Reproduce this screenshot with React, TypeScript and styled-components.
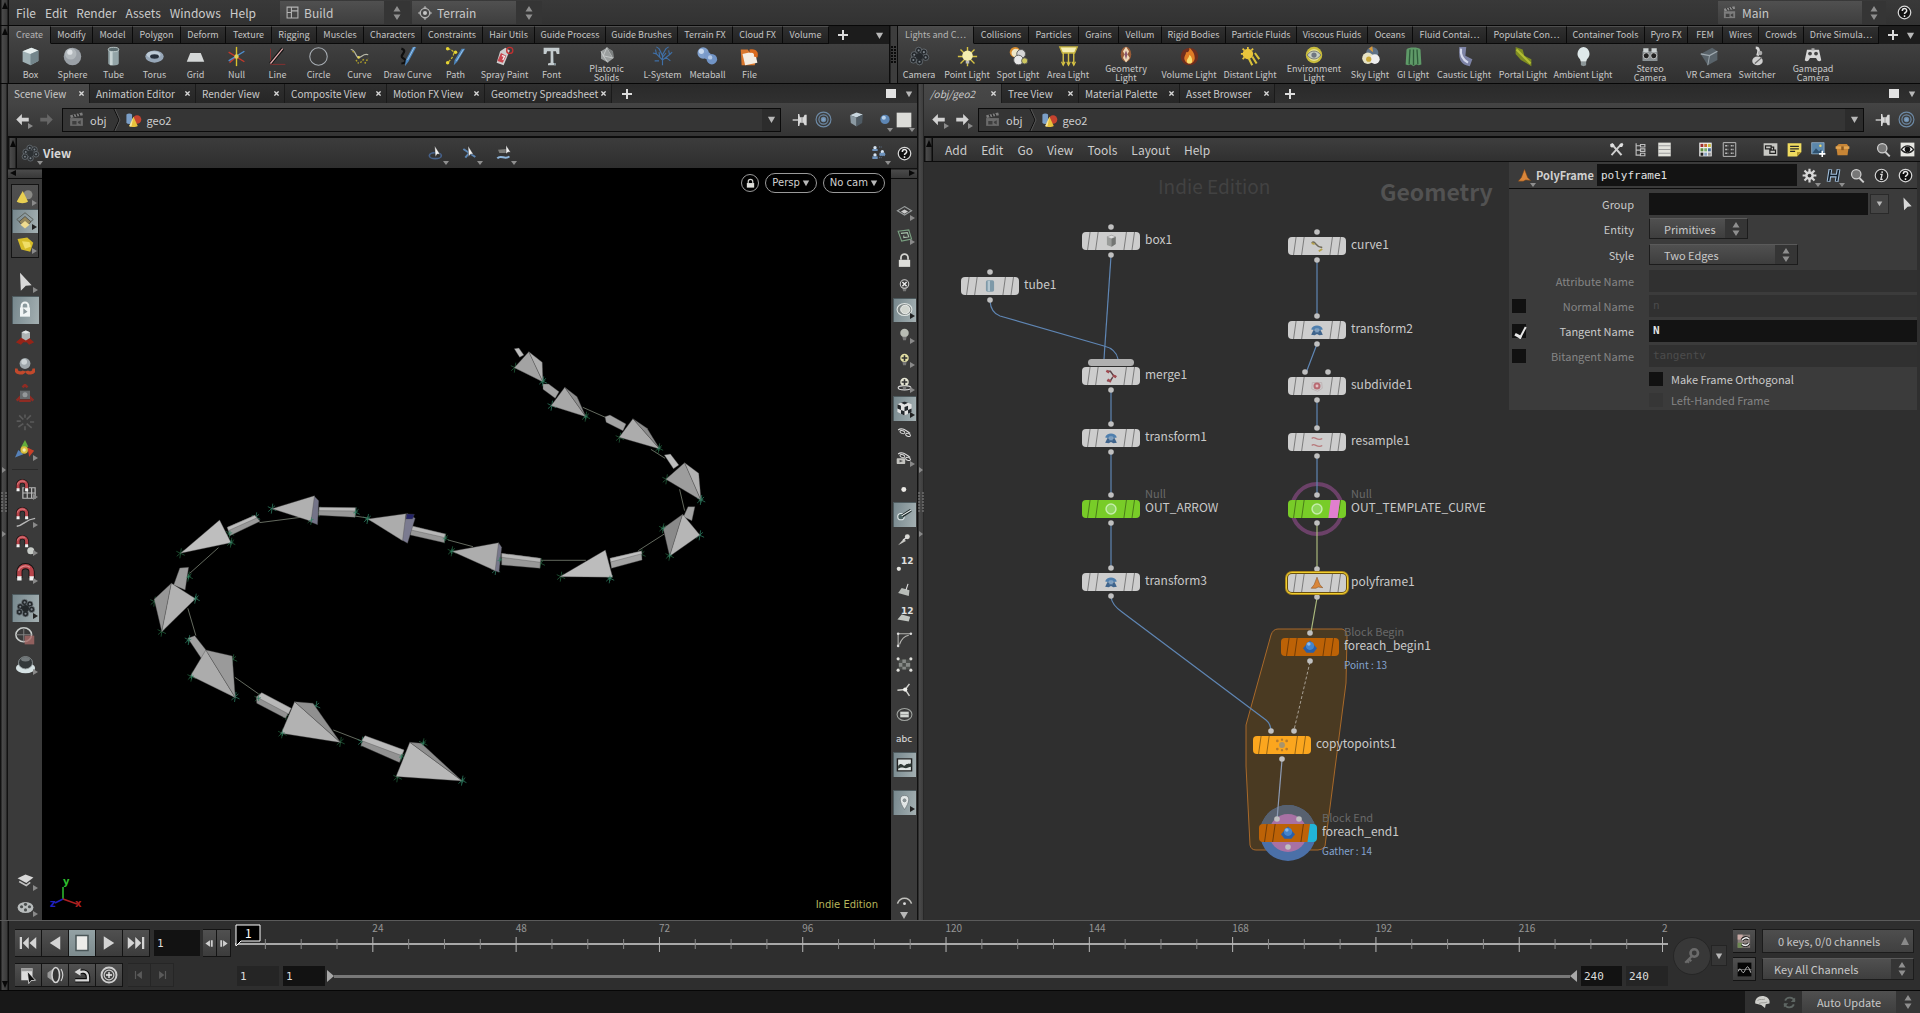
import React from 'react';
import styled, { createGlobalStyle, css } from 'styled-components';

const UI = `'Noto Sans CJK SC', 'Open Sans', sans-serif`;
const MONO = `'DejaVu Sans Mono', 'Liberation Mono', monospace`;

const Global = createGlobalStyle`
  * { box-sizing: border-box; }
  html, body { margin: 0; background: #2b2b2b; }
  body { font-family: ${UI}; font-size: 12px; line-height: 16px; color: #c6c6c6; overflow: hidden; }
  button, input, select { font: inherit; color: inherit; margin: 0; padding: 0; border: 0; background: none; border-radius: 0; outline: 0; }
  button { cursor: default; }
  svg { display: block; flex: none; }
`;

/* ---------- icons ---------- */

const magnet = (
  <>
    <path d="M5 17V10a7 6.500 0 0 1 14 0v7" fill="none" stroke="#111" strokeWidth="7" />
    <path d="M5 16V10a7 6.500 0 0 1 14 0v6" fill="none" stroke="#b8454b" strokeWidth="5" />
    <path d="M4 9a8 7 0 0 1 13-4" fill="none" stroke="#e0868a" strokeWidth="1.500" />
    <path d="M2.500 15h5v5h-5zM16.500 15h5v5h-5z" fill="#f2f2f2" />
  </>
);
const bulb = (c: string) => (
  <>
    <circle cx="12" cy="10" r="6" fill={c} />
    <path d="M9 15h6l-1 5h-4z" fill="#777" />
  </>
);
const clapper = (c: string) => (
  <>
    <path d="M3 6l17-4 1 4-17 4z" fill={c} />
    <path d="M7 5l2 4M11 4l2 4M15 3l2 4" stroke="#222" strokeWidth="1.500" />
    <path d="M3 10h18v11H3z" fill={c} opacity=".75" />
    <path d="M6 14h6v5H6zM14 15l4-2v6l-4-2z" fill="#333" opacity=".8" />
  </>
);
const glasses = (
  <>
    <path d="M3 7c4-3 8-2 17 5" fill="none" stroke="#ddd" strokeWidth="1.500" />
    <ellipse cx="9" cy="10" rx="3.500" ry="2" fill="#333" stroke="#ddd" strokeWidth="1.300" transform="rotate(20 9 10)" />
    <ellipse cx="17" cy="14" rx="3.500" ry="2" fill="#333" stroke="#ddd" strokeWidth="1.300" transform="rotate(20 17 14)" />
  </>
);
const reel = (c: string) => (
  <>
    {[[6, 10], [11, 5], [17, 7], [19, 13], [12, 18], [5, 16]].map(([x, y]) => (
      <g key={x + '-' + y}>
        <circle cx={x} cy={y} r="3.600" fill={c} stroke="#7d858c" strokeWidth=".7" />
        <circle cx={x} cy={y} r="1.200" fill="#7d858c" />
      </g>
    ))}
    <circle cx="12" cy="12" r="4" fill={c} />
  </>
);

const ICONS: Record<string, React.ReactNode> = {
  box: (<><path d="M3 6l10-4 8 3v12l-9 5-9-4z" fill="#9fb0b4" /><path d="M3 6l10-4 8 3-9 4z" fill="#e6eeee" /><path d="M12 9l9-4v12l-9 5z" fill="#73858b" /></>),
  sphere: (<><circle cx="12" cy="12" r="10" fill="#9aa0a6" /><circle cx="10" cy="9" r="6.500" fill="#b2b8bc" /><circle cx="9" cy="7" r="3" fill="#dde1e4" /></>),
  tube: (<><path d="M6 4v16c0 3 12 3 12 0V4z" fill="#93a4a7" /><path d="M8 5v17h3V5z" fill="#c6d2d2" /><ellipse cx="12" cy="4" rx="6" ry="2.500" fill="#5d6d70" stroke="#c6d2d2" /></>),
  torus: (<><ellipse cx="12" cy="12" rx="10.500" ry="7" fill="#97a7b8" /><ellipse cx="11" cy="10" rx="8" ry="4" fill="#bccad6" /><ellipse cx="12" cy="12" rx="5" ry="2.500" fill="#26303c" /></>),
  grid: <path d="M6 8h12l4 10H2z" fill="#d5d8d8" />,
  null: (<><path d="M12 1v22" stroke="#d9c32c" strokeWidth="1.600" /><path d="M3 7l18 11M4 19l8-7" stroke="#c43a2a" strokeWidth="1.600" /><path d="M3 17l18-11" stroke="#4f8fd0" strokeWidth="1.600" /><circle cx="12" cy="12" r="2.500" fill="#e0cf56" /></>),
  line: (<><path d="M4 3v18h17" fill="none" stroke="#8b2f2f" strokeWidth="1" /><path d="M4 20L18 3" stroke="#111" strokeWidth="4" /><path d="M4 20L18 3" stroke="#e6aeb0" strokeWidth="1.400" /></>),
  circle: <circle cx="12" cy="12" r="10" fill="none" stroke="#a8aeb4" strokeWidth="1.200" />,
  curve: (<><path d="M2 4c6 0 5 9 9 9s5-5 11-3" fill="none" stroke="#b8b8a8" strokeWidth="1.400" /><path d="M4 6l3 2M8 16l3 4M13 19l5-5M18 20l4-6" stroke="#b3a32a" strokeWidth="1.600" strokeDasharray="2 1.500" /><circle cx="11" cy="13" r="1.500" fill="#e6d55a" /></>),
  draw: (<><path d="M5 3c9 3-4 8 2 11s1 6-2 6" fill="none" stroke="#0e0e0e" strokeWidth="2.500" /><path d="M22 1l-9 17-4 5 1-7L18 1z" fill="#4d86bd" /><path d="M20 1l-8 15" stroke="#a9cdec" strokeWidth="1" /></>),
  path: (<><path d="M3 3c9 2 9 7 1 15" fill="none" stroke="#c8b82c" strokeWidth="1.400" strokeDasharray="3 1.500" /><circle cx="3" cy="3" r="2" fill="#e6d434" /><circle cx="12" cy="7" r="2" fill="#e6d434" /><circle cx="3" cy="19" r="2" fill="#e6d434" /><path d="M23 3l-9 15-4 4 1-6 8-13z" fill="#4d86bd" /><path d="M21 4l-8 13" stroke="#a9cdec" strokeWidth="1" /></>),
  spray: (<><path d="M7 6l6-4 5 3-7 17-8-3z" fill="#cfcfcf" /><path d="M8 8l6 3-4 8-6-2z" fill="#c9474f" /><path d="M9 11l3 1-2 4" fill="none" stroke="#f4f4f4" strokeWidth="1.500" /><circle cx="18" cy="5" r="3.500" fill="none" stroke="#c03030" strokeWidth="1.500" /></>),
  font: (<><path d="M3 2h18v7h-3l-1-3h-3v13l3 1v2H8v-2l3-1V6H7L6 9H3z" fill="#c4cccf" /><path d="M14 6v13l3 1v2h-2" fill="#7e8c92" /></>),
  platonic: (<><path d="M12 2l8 5 1 9-8 6-9-5L4 7z" fill="#9b9f9f" /><path d="M12 2L7 13l6 9M12 2l8 14-13-3M4 7l3 6" fill="none" stroke="#d6dada" strokeWidth=".9" /><path d="M12 2l8 5v9z" fill="#7c8080" /></>),
  lsystem: (<g fill="none" stroke="#3f6fa6" strokeWidth="1.300"><path d="M12 22V10M12 16L5 9M12 16l8-6M12 11L8 3M12 10l4-7M5 9L1 8M5 9L4 4M20 10l3-3M20 10l-1-5M8 17l-5 0M16 13l5 4M8 3L5 1M16 3l3-2M12 13l4-5M9 13l-1-6" /></g>),
  metaball: (<><circle cx="7" cy="8" r="6.500" fill="#7f9fcc" /><circle cx="17" cy="15" r="6" fill="#7194c6" /><circle cx="12" cy="11" r="4" fill="#7a9aca" /><circle cx="5" cy="6" r="3" fill="#c7d8ee" /><circle cx="15" cy="13" r="2.500" fill="#b2c8e6" /></>),
  file: (<><path d="M2 4h8l2 3h9l-3 15H3z" fill="#d9772d" /><path d="M4 9l14-3 3 13-14 3z" fill="#f3ece2" /><path d="M12 4c8-2 11 4 9 9l-4-1c1-3-1-5-5-4z" fill="#d96a1e" /></>),
  camera: reel('#24282c'),
  pointlight: (<><g stroke="#d6c244" strokeWidth="1.600"><path d="M12 1v22M1 12h22M4 4l16 16M20 4L4 20" /></g><circle cx="12" cy="11" r="6" fill="#f5eeb0" /><path d="M10 17h4v3h-4z" fill="#bbb" /></>),
  spotlight: (<><circle cx="8" cy="7" r="6" fill="#d88b2c" /><circle cx="9" cy="8" r="5" fill="#efe7c8" /><circle cx="15" cy="9" r="5" fill="#d6d6d6" stroke="#555" /><circle cx="12" cy="16" r="5.500" fill="#e8e8e8" stroke="#555" /><circle cx="19" cy="17" r="3.500" fill="#cfc860" stroke="#555" /></>),
  arealight: (<><path d="M2 1h20l-3 7H5z" fill="#f5efb4" stroke="#c4b23d" strokeWidth="1.500" /><path d="M6 8v14M12 8v14M18 8v14" stroke="#d6c244" strokeWidth="1.600" /><path d="M4 18l2 4 2-4M10 18l2 4 2-4M16 18l2 4 2-4" fill="none" stroke="#d6c244" strokeWidth="1.400" /></>),
  geolight: (<><ellipse cx="12" cy="11" rx="7" ry="10" fill="#c06a35" opacity=".7" /><path d="M12 1l4 6-2 4 3 5-5 6-4-6 2-5-2-4z" fill="#efd9b8" /><path d="M12 6l2 5-2 7-2-7z" fill="#8a5a70" /></>),
  volumelight: (<><circle cx="12" cy="12" r="10" fill="#7b2a18" opacity=".8" /><path d="M12 2c5 5 6 8 6 12a6 6 0 0 1-12 0c0-3 2-4 2-7 3 1 4-2 4-5z" fill="#e07c25" /><path d="M12 10c3 3 3 5 3 7a3 3 0 0 1-6 0c0-2 2-3 3-7z" fill="#f6dc70" /></>),
  distant: (<><circle cx="9" cy="9" r="6" fill="#e8c43c" /><path d="M9 1v3M1 9h3M3 3l2 2M15 3l-2 2M3 15l2-2" stroke="#e8c43c" strokeWidth="2" /><path d="M10 14l4 8M14 12l5 8M17 8l5 7" stroke="#d8c03a" strokeWidth="2.400" /></>),
  env: (<><circle cx="12" cy="12" r="11" fill="#c9bd3c" /><circle cx="12" cy="12" r="8" fill="#e5df8f" /><path d="M3 12c5-7 13-7 18 0-5 7-13 7-18 0z" fill="#c8cfc0" stroke="#5c6068" /><circle cx="12" cy="12" r="3.500" fill="#6f7680" /></>),
  sky: (<><circle cx="14" cy="8" r="7" fill="#5e7186" /><path d="M10 3l4-3 1 7z" fill="#d99a3c" /><circle cx="9" cy="14" r="6.500" fill="#e6e2c4" /><circle cx="17" cy="15" r="5.500" fill="#eee" /><circle cx="10" cy="15" r="3" fill="#c9a83a" /></>),
  gi: (<><path d="M4 4c2-3 14-3 16 0l1 17-3 1-3-1-3 2-3-2-3 1-3-1z" fill="#5f9a68" /><path d="M8 4L7 21M12 4v18M16 4l1 17" stroke="#2f5a3a" strokeWidth="1.500" /></>),
  caustic: (<><path d="M6 1l8 0-1 10 8 4-3 8C9 22 6 16 6 10z" fill="#7d83a6" /><path d="M8 3c-1 7 1 12 8 16" fill="none" stroke="#d4d8ec" strokeWidth="2.500" /></>),
  portal: (<><path d="M3 1l8 3 2 7 8 4v8L9 16 3 9z" fill="#7d8b22" /><path d="M4 4l16 16" stroke="#b2be34" strokeWidth="2.500" /></>),
  ambient: (<><path d="M12 1a8 8 0 0 1 4 14l-1 3H9l-1-3a8 8 0 0 1 4-14z" fill="#dfe9ea" /><path d="M9 18h6v4l-3 1-3-1z" fill="#8b9597" /></>),
  stereo: (<><path d="M2 7h20v13H2z" fill="#8a9194" /><path d="M3 3h7v5H3zM14 3h7v5h-7z" fill="#c9cfd0" /><circle cx="7" cy="13" r="4" fill="#222" stroke="#ddd" /><circle cx="17" cy="13" r="4" fill="#222" stroke="#ddd" /></>),
  vr: (<><path d="M2 9l13-7 6 4v10l-11 6z" fill="#59636a" /><path d="M2 9l10 2 9-5" fill="none" stroke="#a0aab0" strokeWidth="1.500" /><path d="M12 11l-2 11" stroke="#a0aab0" /></>),
  switcher: (<><path d="M10 2c5 0 3 6 2 9" fill="none" stroke="#d6d6d6" strokeWidth="3" /><ellipse cx="12" cy="17" rx="6" ry="5" fill="#cfcfcf" /><path d="M9 20l8-7" stroke="#666" strokeWidth="1.500" /><circle cx="15" cy="8" r="2.500" fill="#aaa" /></>),
  gamepad: (<><path d="M4 5h16l3 14c-3 3-5 1-7-3H8c-2 4-4 6-7 3z" fill="#d8d8d8" /><circle cx="8" cy="10" r="2.500" fill="#444" /><circle cx="16" cy="10" r="2.500" fill="#444" /><path d="M10 3h4v3h-4z" fill="#aaa" /></>),
  layout: <path d="M2 2h20v20H2zM10 2v20M2 12h8M10 9h12" fill="none" stroke="#b4b4b4" strokeWidth="2" />,
  radial: (<><circle cx="12" cy="12" r="8" fill="none" stroke="#b4b4b4" strokeWidth="2" /><circle cx="12" cy="12" r="3.500" fill="#c4c4c4" /><path d="M12 0l3 3H9zM12 24l3-3H9zM0 12l3-3v6zM24 12l-3-3v6z" fill="#b4b4b4" /></>),
  clapper: clapper('#8f8f8f'),
  objnet: clapper('#7d7d7d'),
  geo: (<><path d="M2 5c2-2 6-2 8 0v12c-2 2-6 2-8 0z" fill="#7b9fc8" /><circle cx="17" cy="12" r="6" fill="#c5432f" /><path d="M12 8l6 13c-3 2-9 2-12 0z" fill="#e8c13c" /><path d="M12 8L9 22c-1 0-2 0-3-1z" fill="#f8e6a0" /></>),
  help: (<><circle cx="12" cy="12" r="10" fill="#111" stroke="#d8d8d8" strokeWidth="2" /><path d="M8.500 9.500c0-5 7-5 7-.500 0 3-3.500 2.500-3.500 5.500M12 16.500v2.500" fill="none" stroke="#e8e8e8" strokeWidth="2.400" /></>),
  info: (<><circle cx="12" cy="12" r="10" fill="#222" stroke="#d8d8d8" strokeWidth="1.800" /><path d="M10 10h3l-2 8h3" fill="none" stroke="#e0e0e0" strokeWidth="2" /><circle cx="13" cy="6.500" r="1.500" fill="#e0e0e0" /></>),
  search: (<><circle cx="10" cy="10" r="7.500" fill="#777" stroke="#cfcfcf" strokeWidth="2" /><path d="M15 16l7 7" stroke="#cfcfcf" strokeWidth="3" /></>),
  back: <path d="M2 12l9-9v6h11v6H11v6z" fill="#d2d2d2" />,
  fwd: <path d="M22 12l-9-9v6H2v6h11v6z" fill="#d2d2d2" />,
  fwddim: <path d="M22 12l-9-9v6H2v6h11v6z" fill="#666" />,
  pin: (<><path d="M1 12h9" stroke="#d8d8d8" strokeWidth="2" /><path d="M9 3h2l1 5h5l2-4h3v16h-3l-2-4h-5l-1 5H9z" fill="#d8d8d8" /><path d="M15 8v8" stroke="#777" strokeWidth="1" /></>),
  target: (<g fill="none" stroke="#6d8aa6" strokeWidth="1.600"><circle cx="12" cy="12" r="10.500" /><circle cx="12" cy="12" r="6.500" /><circle cx="12" cy="12" r="3" fill="#7da0c4" /></g>),
  cube: (<><path d="M3 6l9-4 9 3-9 4z" fill="#c9d6de" /><path d="M3 6l9 3v13l-8-5z" fill="#8b99a2" /><path d="M12 9l9-4-1 12-8 5z" fill="#4f5b64" /></>),
  ball: (<><circle cx="12" cy="11" r="8" fill="#5d86b4" /><circle cx="10" cy="8" r="3.500" fill="#b8d2ec" /></>),
  sheet: <path d="M1 1h22v22H1z" fill="#dcdcd8" />,
  rotate: (<><ellipse cx="11" cy="16" rx="9" ry="4.500" fill="none" stroke="#46618a" strokeWidth="2.500" /><path d="M10 1l8 13-4-.500-3 4z" fill="#f2f2f2" stroke="#222" strokeWidth=".6" /></>),
  xform: (<><path d="M2 6l18 12M5 19l5-6" stroke="#5d86b4" strokeWidth="3" /><path d="M9 1l8 13-4-.500-3 4z" fill="#f2f2f2" stroke="#222" strokeWidth=".6" /></>),
  move: (<><path d="M3 7l12-1 4 6H5z" fill="#7b7b78" /><path d="M2 20c5-6 12 3 18-3" stroke="#8fb6dc" strokeWidth="3" fill="none" /><path d="M15 0l7 11-4-.500-3 3z" fill="#f2f2f2" stroke="#222" strokeWidth=".6" /></>),
  people: (<g fill="#6e93bd"><circle cx="6" cy="4" r="2.500" fill="#d6e3f0" /><path d="M2 6h8v3H2z" /><circle cx="6" cy="15" r="2.500" fill="#d6e3f0" /><path d="M2 17h8v4H2z" /><circle cx="17" cy="10" r="2.500" fill="#d6e3f0" /><path d="M13 12h8v4h-8zM12 3h4M12 19h4" stroke="#6e93bd" strokeDasharray="2 1" /></g>),
  reel: reel('#2c3033'),
  tools: (<><path d="M4 3l16 18" stroke="#d0d0d0" strokeWidth="3.500" /><path d="M20 3L4 21" stroke="#d0d0d0" strokeWidth="3" /><path d="M2 3l4-1 3 3-4 4-3-2zM17 4l4-3 2 3-2 4h-4z" fill="#e0e0e0" /></>),
  tree: (<g fill="none" stroke="#c0c0c0" strokeWidth="1.800"><path d="M5 2v19h7M5 6h7M5 13h7M12 4h7v4h-7zM12 11h7v4h-7zM12 18h7v4h-7z" /></g>),
  list: (<><path d="M2 1h20v22H2z" fill="#e2e2dc" /><path d="M2 6h20M2 12h20M2 18h20" stroke="#999" strokeWidth="1.500" /></>),
  palette: (<><path d="M2 1h20v22H2z" fill="#eee" />{['#a03030', '#c46a2c', '#c7b93c', '#5c8a3c', '#78b06c', '#466a94', '#222', '#8aa4c4', '#999'].map((c, i) => (<rect key={i} x={4 + (i % 3) * 6} y={3 + Math.floor(i / 3) * 7} width="4.500" height="5" fill={c} />))}</>),
  options: (<g fill="none" stroke="#b8b8b8" strokeWidth="1.600"><path d="M2 1h20v22H2z" /><path d="M5 6h5M14 6h5M5 12h5M14 12h5M5 18h5M14 18h5" strokeDasharray="3 1" strokeWidth="2.500" /></g>),
  netbox: (<><path d="M1 2h22v20H1z" fill="#c8c8c4" /><path d="M4 6h9v5H4zM11 13h9v5h-9zM13 8h4v5" fill="none" stroke="#222" strokeWidth="2" /></>),
  note: (<><path d="M1 2h22v14l-7 7H1z" fill="#f0dc60" /><path d="M5 7h14M5 11h14M5 15h8" stroke="#2a2a2a" strokeWidth="2" /><path d="M23 16h-7v7z" fill="#b89c2c" /></>),
  image: (<><path d="M1 1h20v18H1z" fill="#5b87ac" stroke="#a8c4dc" /><path d="M2 18l6-8 5 5 3-3 5 6z" fill="#2f5270" /><circle cx="15" cy="6" r="2" fill="#e8d66c" /><path d="M18 14v10M13 19h10" stroke="#fff" strokeWidth="2.500" /></>),
  crate: (<><path d="M2 7l4-4h13l3 4-2 14H4z" fill="#c78536" /><path d="M1 7h22v4H1z" fill="#e3a552" /><path d="M10 7h4v6h-4z" fill="#8c5a20" /></>),
  eye: (<><path d="M1 1h22v22H1z" fill="#e6e6e2" /><path d="M2 12c6-8 14-8 20 0-6 7-14 7-20 0z" fill="#fff" stroke="#222" strokeWidth="2" /><circle cx="12" cy="11.500" r="4.500" fill="#111" /></>),
  polyframe: <path d="M12 2l5 13 5 5-8-1-4 2-8 0 5-6z" fill="#d9863a" stroke="#7a4416" strokeWidth=".8" />,
  gear: (<><g stroke="#d8d8d8" strokeWidth="3.500"><path d="M12 1v22M1 12h22M4 4l16 16M20 4L4 20" /></g><circle cx="12" cy="12" r="7" fill="#d8d8d8" /><circle cx="12" cy="12" r="3" fill="#333" /></>),
  hlogo: (<><path d="M7 2L4 22M20 2l-3 20M6 12h12" stroke="#a4c0dc" strokeWidth="6" /><path d="M7 3L4 21M20 3l-3 18M6 12h12" stroke="#101c28" strokeWidth="2.600" /></>),
  cursor: <path d="M6 1l14 15-7 .500-6 6z" fill="#d8d8d8" />,
  selobj: (<><circle cx="16" cy="9" r="6" fill="#8a8a86" /><path d="M9 4l7 14c-3 3-12 3-15 0z" fill="#e8cf52" /></>),
  selgrid: (<><path d="M12 1l11 9-11 9L1 10z" fill="none" stroke="#5a6058" strokeWidth="1.300" /><path d="M12 6l8 7-8 8-8-8z" fill="#94865c" stroke="#444" /><path d="M12 12l6 5-6 5-6-5z" fill="#f0dc90" /></>),
  selprim: (<><path d="M2 4l13-2 8 7-4 12-12-3z" fill="#d6bc28" /><path d="M8 7l10 1 2 6-8 3z" fill="#f0de66" /></>),
  lockbtn: (<><path d="M8 10V7a4 4 0 0 1 8 0v3" fill="none" stroke="#f0f4f4" strokeWidth="2.500" /><path d="M6 9h12v11H6z" fill="#f0f4f4" /><path d="M10 10l5 4-5 3z" fill="#8b979b" /></>),
  gizmo1: (<><path d="M1 17l6-5h10l6 5-6 3-3-3h-4l-3 3z" fill="#962418" /><path d="M8 5l5-2 5 2v7l-5 3-5-3z" fill="#aeb4b4" /><path d="M8 5l5-2 5 2-5 2z" fill="#e0e4e4" /></>),
  gizmo2: (<><path d="M1 15c0 7 9 6 10 3M23 15c0 7-8 6-9 3" fill="none" stroke="#c2492c" strokeWidth="4" /><circle cx="12" cy="9" r="6.500" fill="#9ea6aa" /><circle cx="11" cy="7" r="3.500" fill="#cdd4d6" /></>),
  gizmo3: (<><path d="M9 4l3-3 3 3M2 20l5-5M22 20l-5-5M5 20h14" stroke="#8e2c24" strokeWidth="3" fill="none" /><path d="M6 8h12v10H6z" fill="#666a6c" /><circle cx="12" cy="13" r="3" fill="#94989a" /></>),
  gizmo4: <path d="M5 4l5 5M19 4l-5 5M4 18l6-4M20 19l-6-5M12 3v4M12 17v5M2 11h5M18 12h5" stroke="#5a5a5a" strokeWidth="2" />,
  gizmo5: (<><path d="M12 0l4 8-9 1z" fill="#63ad3c" /><path d="M15 9l8 4-6 7z" fill="#c93f28" /><path d="M0 21l4-9 6 5z" fill="#5681b8" /><circle cx="11" cy="12" r="4.500" fill="#d8bf3e" /><circle cx="11" cy="12" r="2" fill="#f3ecb0" /></>),
  magnet,
  magnetgrid: (<><g stroke="#b8b8b8" fill="none" strokeWidth="1.400"><path d="M9 10h14v12H9zM9 16h14M14 10v12M19 10v12" /></g><g transform="scale(.7)">{magnet}</g></>),
  magnetcurve: (<><path d="M2 22c8-1 10-8 21-9" fill="none" stroke="#b8b8b8" strokeWidth="1.600" /><g transform="scale(.7)">{magnet}</g></>),
  magnetpt: (<><g transform="scale(.7)">{magnet}</g><circle cx="18" cy="18" r="4" fill="#c8ccc8" /></>),
  cluster: reel('#23282b'),
  clock: (<><ellipse cx="10" cy="10" rx="9" ry="8" fill="none" stroke="#c8ccca" strokeWidth="1.800" /><path d="M10 2v16M1 10h18" stroke="#888" /><path d="M11 11h11v10H11z" fill="#a86a68" opacity=".8" /></>),
  dome: (<><ellipse cx="12" cy="16" rx="11" ry="6" fill="#d6e2e4" /><ellipse cx="12" cy="10" rx="8" ry="7" fill="#33383a" stroke="#90989a" /><ellipse cx="12" cy="6" rx="5" ry="2.500" fill="#73797b" /></>),
  paper: (<><path d="M2 8l10-5 10 4-9 7z" fill="#d8d8d8" /><path d="M4 12l9 5 5-4" stroke="#c0c0c0" strokeWidth="2" fill="none" /></>),
  film: (<><ellipse cx="12" cy="12" rx="10" ry="7" fill="#b8bcbc" /><g fill="#4a4e4e"><circle cx="7" cy="11" r="2" /><circle cx="12" cy="8" r="2" /><circle cx="17" cy="11" r="2" /><circle cx="12" cy="15" r="2" /></g></>),
  plane: (<><path d="M12 5l10 6-10 6L2 11z" fill="none" stroke="#9a9e9e" strokeWidth="1.600" /><path d="M12 9l5 3-5 3-5-3z" fill="#ccc" /></>),
  uvplane: (<><path d="M3 6l15-2 4 13-14 3z" fill="none" stroke="#79a080" strokeWidth="1.600" /><path d="M7 9l9-1 2 6-7 1 0-3" fill="none" stroke="#a9c4ac" strokeWidth="1.500" /></>),
  lock: (<><path d="M7 11V8a5 5 0 0 1 10 0v3" fill="none" stroke="#d4d4d0" strokeWidth="2.500" /><path d="M4 11h16v10H4z" fill="#dededa" /></>),
  bulbx: (<>{bulb('#3a3a3a')}<circle cx="12" cy="10" r="6" fill="none" stroke="#ccc" strokeWidth="1.500" /><path d="M9 7l6 6M15 7l-6 6" stroke="#e8e8e8" strokeWidth="2" /></>),
  disc: (<><ellipse cx="12" cy="12" rx="10.500" ry="8.500" fill="#7f8786" stroke="#dfe4e2" strokeWidth="1.500" /><ellipse cx="13" cy="12" rx="6.500" ry="6" fill="#d2d6d0" stroke="#fff" /></>),
  bulb: bulb('#b8bcb4'),
  bulbplus: (<>{bulb('#e4e0a4')}<path d="M12 6v8M8 10h8" stroke="#333" strokeWidth="2.200" /></>),
  bulbplus2: (<><ellipse cx="12" cy="18" rx="9" ry="3" fill="none" stroke="#ddd" strokeWidth="1.500" />{bulb('#e6e6d4')}<path d="M12 6v8M8 10h8" stroke="#333" strokeWidth="2.200" /></>),
  checker: (<><path d="M2 6l10-4 10 4v11l-10 5-10-5z" fill="#e2e2e2" /><path d="M7 4l5-2 5 2-5 2.500zM2 6l5 2v6l-5-2zM7 14l5 2v6l-5-2.500zM12 10l5-2v6l-5 2zM17 14l5-2v5l-5 2.500z" fill="#23282c" /></>),
  glasses,
  glassescam: (<>{glasses}<rect x="1" y="13" width="12" height="8" rx="1" fill="#c4c4c0" /><path d="M5 15l5 2-5 2z" fill="#555" /></>),
  dot: <circle cx="11" cy="12" r="3.500" fill="#eceae6" />,
  brush: (<><circle cx="7" cy="15" r="4.500" fill="#4c6262" stroke="#e4ecec" strokeWidth="1.500" /><path d="M9 14L21 6" stroke="#1b2827" strokeWidth="4.500" /><path d="M8 14L21 6" stroke="#eef2f2" strokeWidth="1.500" /></>),
  pencil: (<><path d="M3 20l8-9 3 3z" fill="#c8c8c4" /><circle cx="16" cy="8" r="3.500" fill="#d8d8d4" /><path d="M10 13l5-4" stroke="#ddd" strokeWidth="2" /></>),
  point: <circle cx="4" cy="18" r="3" fill="#e4e4e0" />,
  flag: (<><path d="M3 17l5-7 11 3-1 8z" fill="#b8bcb8" /><path d="M14 13l3-9" stroke="#e0e0e0" strokeWidth="1.500" /></>),
  wedge: <path d="M2 19l6-7 12 3-2 7z" fill="#c0c4c0" />,
  angle: (<><path d="M3 21V4h18M5 19c3-9 7-12 13-13" fill="none" stroke="#b4b4b0" strokeWidth="1.500" /><circle cx="3" cy="4" r="1.800" fill="#ddd" /><circle cx="3" cy="21" r="1.800" fill="#ddd" /><circle cx="21" cy="4" r="1.800" fill="#ddd" /></>),
  uvgrid: (<><path d="M4 5h16v14H4z" fill="#4c504c" /><path d="M9 5h5v5H9zM4 10h5v5H4zM14 10h6v5h-6zM9 15h5v4H9z" fill="#868a86" /><g fill="#e0e0dc"><circle cx="3" cy="4" r="2.200" /><circle cx="21" cy="4" r="2.200" /><circle cx="3" cy="20" r="2.200" /><circle cx="21" cy="20" r="2.200" /></g></>),
  tri: (<><path d="M13 12L2 13M13 12l6-8M13 12l6 9" stroke="#d0d0cc" strokeWidth="2" /><circle cx="13" cy="12" r="3" fill="#f2f2ee" /></>),
  oval: (<><ellipse cx="12" cy="12" rx="10.500" ry="8.500" fill="none" stroke="#a0a4a0" strokeWidth="1.500" /><rect x="6" y="8" width="12" height="8" fill="#d4d8d4" /><path d="M6 12h12" stroke="#888" /></>),
  bg: (<><path d="M2 4h20v17H2z" fill="#dfe6e4" stroke="#222" strokeWidth="2" /><path d="M3 14c5-7 7 2 10-1s5-1 9-3v5c-5 0-6 3-10 2s-5-1-9 1z" fill="#2f3a36" /></>),
  marker: (<><path d="M12 2c9 0 7 10 0 20C5 12 3 2 12 2z" fill="#dfe4e4" stroke="#6b7478" /><circle cx="12" cy="9" r="3.500" fill="#8a9496" stroke="#fff" /></>),
  gauge: (<><path d="M2 15c4-10 16-10 20 0" fill="none" stroke="#c0c0bc" strokeWidth="2" /><circle cx="12" cy="15" r="2" fill="#ddd" /></>),
  first: <path d="M1 4h3v16H1zM13 4v16l-8-8zM23 4v16l-9-8z" fill="#d4d4d4" />,
  prev: <path d="M19 3v18L5 12z" fill="#d4d4d4" />,
  stop: <rect x="4" y="2" width="16" height="20" fill="#ececea" stroke="#4a5658" strokeWidth="2" />,
  play: <path d="M5 3v18l14-9z" fill="#d4d4d4" />,
  last: <path d="M23 4h-3v16h3zM11 4v16l8-8zM1 4v16l9-8z" fill="#d4d4d4" />,
  stepb: <path d="M13 5v14L3 12zM15 5h4v14h-4z" fill="#cfcfcf" />,
  stepf: <path d="M11 5v14l10-7zM5 5h4v14H5z" fill="#cfcfcf" />,
  pane: (<><path d="M3 3h15v16H3z" fill="#dcdcdc" /><path d="M3 3h15v4H3z" fill="#999" /><path d="M11 7l11 12-6 .500-3 4z" fill="#111" stroke="#eee" /></>),
  speaker: (<><path d="M2 9l7-5v16l-7-5z" fill="#999" /><ellipse cx="13" cy="12" rx="5" ry="10" fill="#333" stroke="#d4d4d4" strokeWidth="2" /><path d="M20 4c3 5 3 11 0 16" fill="none" stroke="#d4d4d4" strokeWidth="1.500" /></>),
  loop: (<><path d="M3 19h17v-4c0-9-10-9-13-5" fill="none" stroke="#0d0d0d" strokeWidth="6" /><path d="M3 19h17v-4c0-9-10-9-13-5" fill="none" stroke="#d8d8d8" strokeWidth="3" /><path d="M2 8l8-5v10z" fill="#d8d8d8" /></>),
  realtime: (<><circle cx="12" cy="12" r="10" fill="none" stroke="#cfcfcf" strokeWidth="2.500" /><circle cx="12" cy="12" r="6.500" fill="none" stroke="#cfcfcf" strokeWidth="1.500" /><path d="M12 8v8M8 12h8" stroke="#eee" strokeWidth="1.800" /></>),
  keyb: <path d="M5 5h2v14H5zM17 5v14l-9-7z" fill="#5a5a5a" />,
  keyf: <path d="M17 5h2v14h-2zM7 5v14l9-7z" fill="#5a5a5a" />,
  key: (<><circle cx="15" cy="8" r="5" fill="none" stroke="#6b6b6b" strokeWidth="3.500" /><path d="M12 12l-9 9M8 16l3 3M5 18l3 3" stroke="#6b6b6b" strokeWidth="3" /></>),
  keylist: (<><path d="M1 1h20v21H1z" fill="#8a7f7c" /><path d="M1 1h8v8H1z" fill="#c8a8a4" /><path d="M1 14h7v8H1z" fill="#6f8a54" /><path d="M19 8a7 7 0 0 0-11 2M8 16a7 7 0 0 0 11-1" fill="none" stroke="#111" strokeWidth="5" /><path d="M19 8a7 7 0 0 0-11 2M8 16a7 7 0 0 0 11-1" fill="none" stroke="#eee" strokeWidth="2.500" /></>),
  graph: (<><path d="M1 1h22v22H1z" fill="#050505" /><path d="M2 15c4-12 6 8 10 0s5-12 10 2" fill="none" stroke="#ccc" strokeWidth="1.600" /><path d="M1 12h22" stroke="#999" /></>),
  brain: (<><path d="M3 14C2 7 8 3 14 4s9 5 8 10l-5 1-1 5-5-4z" fill="#cfcfcb" /><path d="M6 10c4-3 7 0 10-2M8 14c4-2 7 0 11-2" fill="none" stroke="#8e8e8a" /></>),
  refresh: (<><path d="M20 10a8 8 0 0 0-15-1M4 14a8 8 0 0 0 15 1" fill="none" stroke="#5e6663" strokeWidth="3" /><path d="M21 4v7h-7zM3 20v-7h7z" fill="#5e6663" /></>),
  n_box: (<><path d="M5 5l8-3 7 3v12l-7 5-8-3z" fill="#9a9c9a" /><path d="M5 5l8-3 7 3-7 3z" fill="#dedede" stroke="#777" strokeWidth=".6" /><path d="M13 8l7-3v12l-7 5z" fill="#737573" /></>),
  n_tube: (<><rect x="5" y="2" width="14" height="20" rx="3" fill="#7e99a8" /><rect x="8" y="3" width="4" height="18" fill="#b3c6d0" /></>),
  n_merge: (<g fill="none" stroke="#5c4448" strokeWidth="2.500"><path d="M5 4h6l5 7 5 2M5 20h6l4-6" /><path d="M4 3l5 3M15 11l6 3M6 18l6 4" stroke="#a04a50" strokeWidth="4" /></g>),
  n_xform: (<><path d="M2 11c2-9 18-9 20 0l-5 1-5-2-5 2z" fill="#4f7fae" /><path d="M2 20l4-8 6 2 6-2 4 8-6 1-4-2-4 2z" fill="#3f648c" /><path d="M9 9h6v7H9z" fill="#7e9fc0" /></>),
  n_null: <circle cx="12" cy="12" r="8.500" fill="#8fd75c" stroke="#c5edaa" strokeWidth="2.500" />,
  n_curve: (<><path d="M3 7c6-7 8 10 18 7" fill="none" stroke="#6f6a5c" strokeWidth="2.500" /><path d="M3 7l5 2M15 21l6-4" stroke="#b5a24c" strokeWidth="3" /></>),
  n_subd: (<><path d="M4 6l16 0 1 10-8 5-10-4z" fill="none" stroke="#bdb0b2" strokeWidth="1.500" /><circle cx="12" cy="12" r="6" fill="#b86a72" /><circle cx="12" cy="12" r="2.500" fill="#e4c0c4" /></>),
  n_resample: <path d="M3 6c5-6 9 6 18 0M3 18c5-6 9 6 18 0" fill="none" stroke="#b87a7c" strokeWidth="2.200" />,
  n_foreach: (<><path d="M0 14l12-13 12 13-6 8H6z" fill="#2a5fa8" /><circle cx="12" cy="10" r="7" fill="#4484cc" /><circle cx="10" cy="7" r="3" fill="#8cb8ea" /></>),
  n_copy: (<g fill="#b57a2c"><circle cx="12" cy="12" r="5" fill="#a8946c" /><circle cx="4" cy="5" r="2.300" /><circle cx="20" cy="5" r="2.300" /><circle cx="4" cy="19" r="2.300" /><circle cx="20" cy="19" r="2.300" /><circle cx="12" cy="3" r="2" /><circle cx="12" cy="21" r="2" /></g>),
};

const Icon = ({ name, size = 20 }: { name: string; size?: number }) => (
  <svg width={size} height={size} viewBox="0 0 24 24" aria-hidden="true">{ICONS[name]}</svg>
);

/* ---------- shared parts ---------- */

const Glyph = styled.svg`fill: #b8b8b8;`;
const Down = ({ s = 9 }: { s?: number }) => <Glyph width={s} height={s} viewBox="0 0 10 10"><path d="M1 2h8L5 9z" /></Glyph>;
const Plus = () => <Glyph width={10} height={10} viewBox="0 0 10 10"><path d="M4 0h2v4h4v2H6v4H4V6H0V4h4z" fill="#dcdcdc" /></Glyph>;
const UpDown = () => <Glyph width={8} height={14} viewBox="0 0 8 14"><path d="M4 0l3.500 5.500h-7zM4 14l3.500-5.500h-7z" fill="#8f8f8f" /></Glyph>;

const IconButton = styled.button<{ $w?: number; $h?: number; $on?: boolean; $corner?: boolean; $down?: boolean }>`
  position: relative;
  flex: none;
  display: flex;
  align-items: center;
  justify-content: center;
  width: ${p => p.$w ?? 24}px;
  height: ${p => p.$h ?? 24}px;
  ${p => p.$on && css`background: linear-gradient(100deg, #75868c, #a4b0b2); box-shadow: inset 1px 1px 0 #4d5a5e;`}
  ${p => p.$corner && css`
    &::after {
      content: '';
      position: absolute;
      right: 1px;
      bottom: 3px;
      border: 3px solid transparent;
      border-left: 5px solid ${p.$on ? '#222' : '#8a8a8a'};
      border-right: 0;
    }
  `}
  ${p => p.$down && css`
    &::after {
      content: '';
      position: absolute;
      right: 0;
      bottom: 0;
      border: 3px solid transparent;
      border-top: 4px solid #8f8f8f;
      border-bottom: 0;
    }
  `}
`;

const Combo = styled.label<{ $w: number; $h: number; $pad?: number; $flat?: boolean }>`
  display: flex;
  align-items: center;
  flex: none;
  width: ${p => p.$w}px;
  height: ${p => p.$h}px;
  padding-left: ${p => p.$pad ?? 0}px;
  gap: 5px;
  font-size: 11px;
  background: linear-gradient(#505050, #3e3e3e);
  ${p => !p.$flat && css`border: 1px solid #1c1c1c; border-top-color: #5a5a5a;`}
  select {
    appearance: none;
    flex: 1;
    min-width: 0;
    height: 100%;
    color: #c8c8c8;
  }
`;
const ComboArrows = styled.span<{ $w: number }>`
  width: ${p => p.$w}px;
  height: 100%;
  flex: none;
  display: flex;
  align-items: center;
  justify-content: center;
  background: #353535;
`;

const Frame = styled.div`
  display: flex;
  flex-direction: column;
  height: 100vh;
  background: #101010;
`;

/* ---------- main menu ---------- */

const Handle = styled.div<{ $end?: boolean }>`
  flex: none;
  width: 9px;
  display: flex;
  justify-content: center;
  align-items: ${p => (p.$end ? 'flex-end' : 'flex-start')};
  padding: 2px 0;
  background: linear-gradient(90deg, #111 1px, #4a4a4a 2px, #3a3a3a 7px, #0c0c0c 8px);
`;
const HandleMark = ({ down }: { down?: boolean }) => (
  <svg width="6" height="7" viewBox="0 0 6 7"><path d={down ? 'M0 0h6L3 7z' : 'M3 0l3 7H0z'} fill="#080808" /></svg>
);

const MenuBar = styled.header`
  flex: none;
  display: flex;
  height: 26px;
  border-bottom: 1px solid #070707;
  background: linear-gradient(#393939, #323232);
`;
const MenuItems = styled.nav<{ $gap: number; $left: number }>`
  display: flex;
  align-items: center;
  gap: ${p => p.$gap}px;
  padding-left: ${p => p.$left}px;
  font-size: 12px;
  button { color: #cccccc; white-space: nowrap; }
`;
const MenuCombos = styled.div`
  display: flex;
  align-items: center;
  gap: 2px;
  flex: 1;
  margin-left: 24px;
  ${Combo} { font-size: 12px; }
`;
const Spring = styled.div`flex: 1;`;

/* ---------- shelf ---------- */

const ShelfRow = styled.section`
  flex: none;
  display: flex;
  height: 58px;
  border-bottom: 1px solid #070707;
  background: #111;
`;
const ShelfHalf = styled.div<{ $w?: number }>`
  display: flex;
  flex-direction: column;
  min-width: 0;
  flex: ${p => (p.$w ? `0 0 ${p.$w}px` : '1')};
  background: linear-gradient(#404040 18px, #303030);
`;
const ShelfTabs = styled.div`
  display: flex;
  flex: none;
  height: 18px;
  background: #1c1c1c;
`;
const ShelfTab = styled.button<{ $w: number; $on?: boolean }>`
  flex: 0 1 ${p => p.$w}px;
  min-width: 0;
  white-space: nowrap;
  font-size: 9px;
  line-height: 16px;
  color: ${p => (p.$on ? '#b4b4b4' : '#c4c4c4')};
  background: ${p => (p.$on ? 'linear-gradient(#4a4a4a,#404040)' : 'linear-gradient(#303030,#222)')};
  border-right: 1px solid #0a0a0a;
  border-bottom: 1px solid ${p => (p.$on ? '#404040' : '#0a0a0a')};
  border-top: 1px solid #4e4e4e;
`;
const ShelfEnd = styled.div`
  flex: 1;
  display: flex;
  align-items: center;
  justify-content: space-between;
  padding: 0 5px 0 9px;
`;
const Tools = styled.div`
  display: flex;
  flex: 1;
  padding-top: 2px;
`;
const Tool = styled.button<{ $w: number; $two?: boolean }>`
  flex: 0 1 ${p => p.$w}px;
  min-width: 0;
  display: flex;
  flex-direction: column;
  align-items: center;
  justify-content: flex-start;
  gap: ${p => (p.$two ? 0 : 2)}px;
  font-size: 9px;
  line-height: ${p => (p.$two ? 9 : 12)}px;
  color: #c8c8c8;
  span { white-space: pre; }
`;
const ShelfGrip = styled.div`
  flex: none;
  width: 9px;
  display: flex;
  align-items: center;
  justify-content: center;
  background: linear-gradient(90deg, #0c0c0c 1px, #3d3d3d 2px, #3d3d3d 8px, #0c0c0c 8px);
`;

type TabDef = [string, number];
const TABS_L: TabDef[] = [['Create', 42], ['Modify', 42], ['Model', 40], ['Polygon', 48], ['Deform', 45], ['Texture', 46], ['Rigging', 45], ['Muscles', 47], ['Characters', 58], ['Constraints', 61], ['Hair Utils', 52], ['Guide Process', 71], ['Guide Brushes', 72], ['Terrain FX', 55], ['Cloud FX', 50], ['Volume', 46]];
const TABS_R: TabDef[] = [['Lights and C…', 76], ['Collisions', 55], ['Particles', 50], ['Grains', 40], ['Vellum', 43], ['Rigid Bodies', 64], ['Particle Fluids', 71], ['Viscous Fluids', 71], ['Oceans', 45], ['Fluid Contai…', 74], ['Populate Con…', 80], ['Container Tools', 78], ['Pyro FX', 43], ['FEM', 35], ['Wires', 36], ['Crowds', 45], ['Drive Simula…', 75]];
type ToolDef = [string, string, number];
const TOOLS_L: ToolDef[] = [['Box', 'box', 43], ['Sphere', 'sphere', 41], ['Tube', 'tube', 41], ['Torus', 'torus', 41], ['Grid', 'grid', 41], ['Null', 'null', 41], ['Line', 'line', 41], ['Circle', 'circle', 41], ['Curve', 'curve', 41], ['Draw Curve', 'draw', 55], ['Path', 'path', 41], ['Spray Paint', 'spray', 57], ['Font', 'font', 37], ['Platonic\nSolids', 'platonic', 73], ['L-System', 'lsystem', 39], ['Metaball', 'metaball', 51], ['File', 'file', 33]];
const TOOLS_R: ToolDef[] = [['Camera', 'camera', 42], ['Point Light', 'pointlight', 54], ['Spot Light', 'spotlight', 48], ['Area Light', 'arealight', 52], ['Geometry\nLight', 'geolight', 64], ['Volume Light', 'volumelight', 62], ['Distant Light', 'distant', 60], ['Environment\nLight', 'env', 68], ['Sky Light', 'sky', 44], ['GI Light', 'gi', 42], ['Caustic Light', 'caustic', 60], ['Portal Light', 'portal', 58], ['Ambient Light', 'ambient', 62], ['Stereo\nCamera', 'stereo', 72], ['VR Camera', 'vr', 46], ['Switcher', 'switcher', 50], ['Gamepad\nCamera', 'gamepad', 62]];

const Shelf = ({ tabs, tools, width }: { tabs: TabDef[]; tools: ToolDef[]; width?: number }) => (
  <ShelfHalf $w={width}>
    <ShelfTabs>
      {tabs.map(([t, w], i) => <ShelfTab key={t} $w={w} $on={i === 0}>{t}</ShelfTab>)}
      <ShelfEnd><Plus /><Down /></ShelfEnd>
    </ShelfTabs>
    <Tools>
      {tools.map(([t, ic, w]) => {
        const two = t.includes('\n');
        return <Tool key={t} $w={w} $two={two}><Icon name={ic} size={two ? 18 : 21} /><span>{t}</span></Tool>;
      })}
    </Tools>
  </ShelfHalf>
);

/* ---------- panes ---------- */

const Desk = styled.main`
  flex: 1;
  min-height: 0;
  display: grid;
  grid-template-columns: 8px minmax(0, 909fr) 7px minmax(0, 996fr);
`;
const Split = styled.div`
  display: flex;
  flex-direction: column;
  align-items: center;
  justify-content: center;
  background: linear-gradient(90deg, #111 1px, #4a4a4a 2px, #3e3e3e 6px, #111 7px);
`;
const SplitGrip = () => (
  <svg width="6" height="70" viewBox="0 0 6 70">
    <path d="M1 0l4 3-4 3zM1 64l4 3-4 3z" fill="#888" />
    {[26, 29, 32, 35, 38, 41, 44].map(y => <path key={y} d={`M0 ${y}h2M4 ${y}h2`} stroke="#8a8a8a" />)}
  </svg>
);
const Pane = styled.section`
  display: flex;
  flex-direction: column;
  min-width: 0;
  min-height: 0;
  background: #333;
`;
const PaneTabs = styled.div`
  flex: none;
  display: flex;
  align-items: stretch;
  height: 19px;
  background: linear-gradient(#2a2a2a, #303030);
`;
const PaneTab = styled.button<{ $w: number; $on?: boolean; $italic?: boolean }>`
  flex: 0 1 ${p => p.$w}px;
  min-width: 0;
  display: flex;
  align-items: center;
  justify-content: space-between;
  padding: 0 5px 0 6px;
  white-space: nowrap;
  font-size: 10px;
  font-style: ${p => (p.$italic ? 'italic' : 'normal')};
  color: #cacaca;
  background: ${p => (p.$on ? 'linear-gradient(#484848,#444)' : 'linear-gradient(#2f2f2f,#262626)')};
  border-right: 1px solid #1a1a1a;
`;
const Close = () => <svg width="5" height="5" viewBox="0 0 6 6"><path d="M.500 .500l5 5M5.500 .500l-5 5" stroke="#d8d8d8" strokeWidth="1.600" /></svg>;
const PaneTabEnd = styled.div`
  flex: 1;
  display: flex;
  align-items: center;
  gap: 9px;
  padding: 0 4px 0 10px;
`;
const PathBar = styled.div`
  flex: none;
  display: flex;
  align-items: center;
  height: 33px;
  padding: 0 2px;
  background: linear-gradient(#444, #343434);
`;
const PathField = styled.div`
  flex: 1;
  display: flex;
  align-items: center;
  height: 24px;
  margin: 0 8px 0 4px;
  padding-left: 5px;
  background: #353535;
  border: 1px solid #0b0b0b;
  button { display: flex; align-items: center; gap: 5px; height: 100%; color: #cfcfcf; font-size: 11px; }
`;
const Chevron = () => <svg width="18" height="22" viewBox="0 0 18 22"><path d="M7 0l5 11-5 11" fill="none" stroke="#0c0c0c" /><path d="M8 0l5 11-5 11" fill="none" stroke="#555" /></svg>;
const PathDrop = styled.button`
  width: 18px;
  justify-content: center;
  background: #2c2c2c;
`;

const PaneHead = ({ tabs, forward, extra }: { tabs: TabDef[]; forward: boolean; extra?: boolean }) => (
  <>
    <PaneTabs>
      {tabs.map(([t, w], i) => (
        <PaneTab key={t} $w={w} $on={i === 0} $italic={t.startsWith('/')}>{t}<Close /></PaneTab>
      ))}
      <PaneTabEnd><Plus /><Spring /><svg width="10" height="9"><path d="M0 0h10v9H0z" fill="#e2e2e2" /></svg><Down s={8} /></PaneTabEnd>
    </PaneTabs>
    <PathBar>
      <IconButton $corner aria-label="Back"><Icon name="back" size={15} /></IconButton>
      <IconButton $corner={forward} aria-label="Forward"><Icon name={forward ? 'fwd' : 'fwddim'} size={15} /></IconButton>
      <PathField>
        <button><Icon name="objnet" size={17} />obj</button>
        <Chevron />
        <button><Icon name="geo" size={17} />geo2</button>
        <Spring />
        <PathDrop aria-label="Path history"><Down /></PathDrop>
      </PathField>
      <IconButton $w={22} aria-label="Pin"><Icon name="pin" size={16} /></IconButton>
      <IconButton aria-label="Follow"><Icon name="target" size={17} /></IconButton>
      {extra && (
        <>
          <IconButton $w={42} aria-label="Objects"><Icon name="cube" size={17} /></IconButton>
          <IconButton $w={16} $down aria-label="Display"><Icon name="ball" size={14} /></IconButton>
          <IconButton $w={22} $down aria-label="Color"><Icon name="sheet" size={16} /></IconButton>
        </>
      )}
    </PathBar>
  </>
);

/* ---------- scene view ---------- */

const ViewBar = styled.div`
  flex: none;
  display: flex;
  align-items: center;
  height: 32px;
  border-top: 2px solid #0c0c0c;
  background: linear-gradient(#3c3c3c, #2e2e2e);
  ${Handle} { align-self: stretch; }
  strong { flex: 6; font-size: 12px; color: #d6d6d6; }
`;
const ViewTools = styled.div`
  flex: 7;
  display: flex;
  gap: 8px;
`;
const ViewBody = styled.div`
  flex: 1;
  min-height: 0;
  display: flex;
`;
const SideBar = styled.div<{ $w: number }>`
  flex: none;
  display: flex;
  flex-direction: column;
  align-items: center;
  width: ${p => p.$w}px;
  background: #3a3a3a;
`;
const SideHandle = styled.div<{ $end?: boolean }>`
  align-self: stretch;
  display: flex;
  justify-content: ${p => (p.$end ? 'flex-end' : 'flex-start')};
  align-items: center;
  height: 11px;
  flex: none;
  padding: 0 2px;
  border-bottom: 1px solid #0c0c0c;
  background: linear-gradient(#111 1px, #4a4a4a 2px, #383838);
`;
const SideMark = ({ right }: { right?: boolean }) => (
  <svg width="6" height="6" viewBox="0 0 6 6"><path d={right ? 'M0 0l6 3-6 3z' : 'M6 0L0 3l6 3z'} fill="#080808" /></svg>
);
const SideGroup = styled.div<{ $top: number; $h?: number; $boxed?: boolean }>`
  flex: none;
  display: flex;
  flex-direction: column;
  margin-top: ${p => p.$top}px;
  ${p => p.$h && css`height: ${p.$h}px; > button { flex: 1; height: auto; }`}
  ${p => p.$boxed && css`background: linear-gradient(#505050, #404040); outline: 1px solid #141414;`}
`;
const Rule = styled.hr`
  width: 26px;
  margin: 5px 0 0;
  border: 0;
  border-top: 1px solid #2a2a2a;
`;
const SideText = styled.span<{ $over?: boolean }>`
  font: 9px/9px 'DejaVu Sans', sans-serif;
  color: #e0e0e0;
  ${p => p.$over && css`position: absolute; right: 2px; top: 5px; font-weight: 700;`}
`;
const Viewport = styled.div`
  position: relative;
  flex: 1;
  min-width: 0;
  background: #000;
  > svg { width: 100%; height: 100%; }
`;
const CamTools = styled.div`
  position: absolute;
  top: 5px;
  right: 6px;
  display: flex;
  align-items: center;
  gap: 6px;
`;
const Pill = styled.button`
  display: flex;
  align-items: center;
  gap: 2px;
  height: 20px;
  padding: 0 6px;
  border: 1px solid #9a9a9a;
  border-radius: 10px;
  font: 10px/18px 'DejaVu Sans', sans-serif;
  color: #d0d0d0;
`;
const RoundButton = styled(Pill)`
  width: 18px;
  height: 18px;
  padding: 0;
  justify-content: center;
`;
const Edition = styled.span`
  position: absolute;
  right: 13px;
  bottom: 8px;
  font: 10px/14px 'DejaVu Sans', sans-serif;
  color: #b7b55c;
`;

const LIGHT = '#bdbdbd';
const MID = '#a3a3a3';
const DARK = '#8a8a8a';
const ARROWS: [string, string][] = [
  ['978,86 990,84 1003,105 992,112', LIGHT], ['1016,95 1053,186 978,143', MID], ['1016,95 1051,127 1053,186', '#b0b0b0'],
  ['1053,192 1068,192 1095,215 1085,235 1053,208', MID], ['1110,202 1165,290 1074,257', '#a8a8a8'], ['1110,202 1142,230 1165,290', '#8f8f8f'],
  ['1215,290 1228,285 1270,312 1262,332 1218,307', MID], ['1288,296 1358,387 1252,352', '#acacac'], ['1288,296 1325,325 1358,387', '#8c8c8c'],
  ['1370,405 1386,402 1408,435 1394,446', LIGHT], ['1423,428 1466,541 1374,478', '#9d9d9d'], ['1423,428 1460,460 1466,541', '#b2b2b2'],
  ['1432,560 1450,560 1442,602 1420,590', MID], ['1418,583 1384,709 1367,625', DARK], ['1418,583 1463,645 1384,709', '#b6b6b6'],
  ['1228,715 1310,693 1312,720 1232,745', MID], ['1228,715 1310,693 1312,701 1230,726', '#c0c0c0'], ['1216,690 1235,772 1097,770', '#bcbcbc'],
  ['945,700 1047,715 1045,745 945,735', '#989898'], ['945,700 1047,715 1046,727 945,712', '#b8b8b8'], ['937,668 945,682 938,757 918,748', '#77778a'], ['937,668 928,752 815,694', '#adadad'],
  ['708,617 798,642 795,668 706,645', '#989898'], ['708,617 798,642 797,653 708,630', '#b8b8b8'], ['697,580 719,595 699,670 680,657', '#7b7b90'], ['697,582 717,583 712,597 695,597', '#242468'], ['695,581 686,662 595,597', '#acacac'],
  ['468,562 563,563 562,592 466,586', '#979797'], ['468,562 563,563 563,573 468,572', '#bababa'], ['455,528 467,542 464,614 440,603', '#747488'], ['456,527 447,604 345,566', '#b0b0b0'],
  ['228,622 300,586 314,604 235,647', '#999'], ['228,622 300,586 305,594 231,632', '#bcbcbc'], ['208,600 238,668 106,700', '#bebebe'],
  ['104,744 127,742 118,810 88,795', '#9c9c9c'], ['82,790 57,935 37,838', '#969696'], ['82,790 145,836 57,935', '#b2b2b2'],
  ['125,955 143,947 178,998 160,1015', '#a2a2a2'], ['172,990 249,1133 132,1067', '#acacac'], ['172,990 241,1008 249,1133', '#9a9a9a'],
  ['318,1118 395,1165 380,1195 305,1150 304,1130', '#929292'], ['318,1118 395,1165 388,1182 306,1132', '#b8b8b8'], ['404,1145 524,1268 369,1240', '#b2b2b2'], ['404,1145 452,1150 524,1268', '#909090'],
  ['588,1247 690,1290 678,1328 577,1277', '#929292'], ['588,1247 690,1290 684,1307 579,1262', '#bababa'], ['705,1267 842,1383 669,1370', '#b8b8b8'], ['705,1267 735,1270 842,1383', '#8e8e8e'],
];
const LINKS = 'M1157 262L1218 293M1335 388L1372 415M1410 508L1423 572M1302 692L1370 642M1047 721H1165M805 660L870 680M560 588L595 594M312 608L420 592M130 760L205 683M125 865L146 947M248 1072L310 1122M505 1230L577 1262';
const STARS = [[1053, 184], [980, 143], [1165, 290], [1076, 257], [1356, 385], [1254, 353], [1466, 540], [1376, 478], [1384, 707], [1463, 646], [1367, 625], [1100, 770], [1228, 775], [1310, 703], [815, 694], [930, 750], [940, 720], [1047, 730], [595, 597], [690, 640], [797, 655], [345, 566], [448, 600], [470, 575], [563, 577], [106, 700], [235, 640], [303, 592], [238, 668], [57, 935], [145, 836], [38, 845], [127, 770], [249, 1131], [135, 1070], [243, 1018], [128, 960], [524, 1266], [372, 1240], [460, 1158], [310, 1135], [383, 1185], [842, 1382], [673, 1372], [740, 1270], [580, 1265], [683, 1310]];

const Scene = () => (
  <svg viewBox="42 168 849 752" preserveAspectRatio="xMidYMid meet" role="img" aria-label="Arrows copied along a curve">
    <g transform="translate(140 320) scale(.3827 .3333)">
      <path d={LINKS} stroke="#8b9384" strokeWidth="2" fill="none" />
      {STARS.map(([x, y], i) => <path key={i} d={`M${x - 11} ${y - 6}l22 12M${x + 2} ${y - 15}l-4 30M${x - 10} ${y + 9}l18-18`} stroke={i % 3 ? '#24663f' : '#2f8568'} strokeWidth="2" />)}
      {ARROWS.map(([pts, c], i) => <polygon key={i} points={pts} fill={c} stroke="#4a4a4a" strokeWidth="1" />)}
      {STARS.filter((_, i) => i % 2 === 0).map(([x, y], i) => <path key={i} d={`M${x - 6} ${y + 2}l12-4M${x} ${y - 8}v16`} stroke="#2f8060" strokeWidth="2" />)}
    </g>
    <path d="M63 899v-12" stroke="#2fc02f" strokeWidth="1.500" />
    <path d="M63 899l14 5" stroke="#b02020" strokeWidth="1.500" />
    <path d="M63 899l-8 4" stroke="#2020c0" strokeWidth="1.500" />
    <g fontFamily="DejaVu Sans, sans-serif" fontSize="10" fontWeight="bold">
      <text x="63" y="885" fill="#2fc02f">y</text>
      <text x="75" y="907" fill="#b02020">x</text>
      <text x="50" y="907" fill="#2020c0">z</text>
    </g>
  </svg>
);

type SideDef = [string, string, boolean?, boolean?];
const side = (items: SideDef[], w: number, h: number, size: number) => items.map(([ic, label, on, corner]) => (
  <IconButton key={ic} $w={w} $h={h} $on={on} $corner={corner} aria-label={label}>
    {ic === 'text' ? <SideText>abc</SideText> : <Icon name={ic} size={size} />}
    {(ic === 'point' || ic === 'wedge') && <SideText $over>12</SideText>}
  </IconButton>
));

const SceneView = () => (
  <Pane>
    <PaneHead forward={false} extra tabs={[['Scene View', 82], ['Animation Editor', 106], ['Render View', 89], ['Composite View', 102], ['Motion FX View', 98], ['Geometry Spreadsheet', 127]]} />
    <ViewBar>
      <Handle><HandleMark /></Handle>
      <IconButton $w={26} $down aria-label="View tool"><Icon name="reel" size={19} /></IconButton>
      <strong>View</strong>
      <ViewTools>
        <IconButton $w={26} $down aria-label="Orbit"><Icon name="rotate" size={16} /></IconButton>
        <IconButton $w={26} $down aria-label="Transform"><Icon name="xform" size={16} /></IconButton>
        <IconButton $w={26} $down aria-label="Move"><Icon name="move" size={16} /></IconButton>
      </ViewTools>
      <IconButton $down aria-label="Views"><Icon name="people" size={16} /></IconButton>
      <IconButton $w={26} aria-label="Help"><Icon name="help" size={15} /></IconButton>
    </ViewBar>
    <ViewBody>
      <SideBar $w={34}>
        <SideHandle><SideMark /></SideHandle>
        <SideGroup $top={6} $boxed>
          {side([['selobj', 'Objects', false, true], ['selgrid', 'Geometry', true, true], ['selprim', 'Primitives', false, true]], 26, 24, 18)}
        </SideGroup>
        <SideGroup $top={11}>
          {side([['cursor', 'Select', false, true], ['lockbtn', 'Secure selection', true], ['gizmo1', 'Move'], ['gizmo2', 'Rotate'], ['gizmo3', 'Scale'], ['gizmo4', 'Pose'], ['gizmo5', 'Handle', false, true]], 27, 28, 20)}
        </SideGroup>
        <Rule />
        <SideGroup $top={5}>
          {side([['magnetgrid', 'Snap grid', false, true], ['magnetcurve', 'Snap curve', false, true], ['magnetpt', 'Snap point', false, true], ['magnet', 'Snap', false, true]], 27, 28, 21)}
        </SideGroup>
        <SideGroup $top={7}>
          {side([['cluster', 'View', true, true], ['clock', 'Render region'], ['dome', 'Flipbook', false, true]], 27, 28, 21)}
        </SideGroup>
        <Spring />
        <SideGroup $top={0}>{side([['paper', 'Snapshots', false, true], ['film', 'Film', false, true]], 27, 26, 19)}</SideGroup>
      </SideBar>
      <Viewport>
        <Scene />
        <CamTools>
          <RoundButton aria-label="Lock camera"><Icon name="lock" size={11} /></RoundButton>
          <Pill>Persp<Down s={8} /></Pill>
          <Pill>No cam<Down s={8} /></Pill>
        </CamTools>
        <Edition>Indie Edition</Edition>
      </Viewport>
      <SideBar $w={26}>
        <SideHandle $end><SideMark right /></SideHandle>
        <SideGroup $top={20} $h={271}>
          {side([['plane', 'Reference plane', false, true], ['uvplane', 'Construction plane', false, true], ['lock', 'Lock'], ['bulbx', 'No lighting'], ['disc', 'Headlight', true, true], ['bulb', 'Normal lighting', false, true], ['bulbplus', 'High quality', false, true], ['bulbplus2', 'Shadows', false, true], ['checker', 'Materials', true, true], ['glasses', 'Hide'], ['glassescam', 'Ghost', false, true]], 23, 24, 17)}
        </SideGroup>
        <SideGroup $top={7}>
          {side([['dot', 'Points'], ['brush', 'Normals', true], ['pencil', 'Trails'], ['point', 'Point numbers'], ['flag', 'Prim normals'], ['wedge', 'Prim numbers'], ['angle', 'Hulls'], ['uvgrid', 'UV'], ['tri', 'Vertices'], ['oval', 'Profile'], ['text', 'Labels'], ['bg', 'Background', true]], 23, 25, 17)}
        </SideGroup>
        <SideGroup $top={13}>{side([['marker', 'Markers', true, true]], 23, 25, 17)}</SideGroup>
        <Spring />
        <SideGroup $top={0}>{side([['gauge', 'Display options']], 23, 18, 17)}</SideGroup>
        <Down s={10} />
      </SideBar>
    </ViewBody>
  </Pane>
);

/* ---------- network editor ---------- */

const NetBar = styled.div`
  flex: none;
  display: flex;
  align-items: stretch;
  height: 26px;
  border-top: 2px solid #0c0c0c;
  border-bottom: 1px solid #0c0c0c;
  background: linear-gradient(#3e3e3e, #303030);
`;
const NetIcons = styled.div`
  margin-left: auto;
  padding-right: 1px;
  display: flex;
  align-items: center;
`;
const IconGap = styled.span`width: 17px;`;
const Canvas = styled.div`
  position: relative;
  flex: 1;
  min-height: 0;
  overflow: hidden;
  background: #2f2f2f;
  > svg { position: absolute; left: 0; top: 0; }
`;
const Watermark = styled.span<{ $x: number; $y: number; $bold?: boolean }>`
  position: absolute;
  left: ${p => p.$x}px;
  top: ${p => p.$y}px;
  font-size: ${p => (p.$bold ? 23 : 19)}px;
  line-height: 24px;
  font-weight: ${p => (p.$bold ? 700 : 400)};
  color: ${p => (p.$bold ? '#525252' : '#424242')};
`;
const NodeBox = styled.div<{ $x: number; $y: number; $c: string; $sel?: boolean; $flag?: [string, number] }>`
  position: absolute;
  left: ${p => p.$x - 29}px;
  top: ${p => p.$y - 9}px;
  width: 58px;
  height: 18px;
  display: flex;
  align-items: center;
  justify-content: center;
  border-radius: 4px;
  background:
    ${p => (p.$flag ? `linear-gradient(98deg, transparent ${p.$flag[1] - 1}px, ${p.$flag[0]} ${p.$flag[1]}px, ${p.$flag[0]} ${p.$flag[1] + 8}px, transparent ${p.$flag[1] + 9}px),` : '')}
    linear-gradient(98deg, transparent 7px, #0006 8px, transparent 9px, transparent 15px, #0006 16px, transparent 17px, transparent 43px, #0006 44px, transparent 45px, transparent 51px, #0006 52px, transparent 53px),
    ${p => p.$c};
  ${p => p.$sel && css`box-shadow: 0 0 0 1px #6a5010, 0 0 0 2px #f0d030, 0 0 0 3px #b08a1c;`}
`;
const NodeLabel = styled.div<{ $x: number; $y: number }>`
  position: absolute;
  left: ${p => p.$x + 34}px;
  top: ${p => p.$y - 10}px;
  font-size: 12px;
  line-height: 16px;
  color: #c9c9c9;
  white-space: nowrap;
`;
const NodeType = styled.small`
  position: absolute;
  left: 0;
  top: -13px;
  font-size: 11px;
  line-height: 14px;
  color: #696969;
`;
const NodeNote = styled.small`
  position: absolute;
  left: 0;
  top: 21px;
  font-size: 10px;
  line-height: 14px;
  color: #84a4cf;
`;

type NodeDef = { n: string; x: number; y: number; i: string; c?: string; type?: string; note?: string; sel?: boolean; flag?: [string, number]; ins?: number[] };
const GREY = '#cdcdcd';
/* Node centres, in canvas coordinates. */
const NODES: NodeDef[] = [
  { n: 'box1', x: 187, y: 79, i: 'n_box' },
  { n: 'tube1', x: 66, y: 124, i: 'n_tube' },
  { n: 'merge1', x: 187, y: 214, i: 'n_merge', ins: [] },
  { n: 'transform1', x: 187, y: 276, i: 'n_xform' },
  { n: 'OUT_ARROW', x: 187, y: 347, i: 'n_null', c: '#78cc28', type: 'Null' },
  { n: 'transform3', x: 187, y: 420, i: 'n_xform' },
  { n: 'curve1', x: 393, y: 84, i: 'n_curve' },
  { n: 'transform2', x: 393, y: 168, i: 'n_xform' },
  { n: 'subdivide1', x: 393, y: 224, i: 'n_subd', ins: [-12, 11] },
  { n: 'resample1', x: 393, y: 280, i: 'n_resample' },
  { n: 'OUT_TEMPLATE_CURVE', x: 393, y: 347, i: 'n_null', c: '#78cc28', type: 'Null', flag: ['#e07fcf', 43] },
  { n: 'polyframe1', x: 393, y: 421, i: 'polyframe', sel: true },
  { n: 'foreach_begin1', x: 386, y: 485, i: 'n_foreach', c: '#bd6206', type: 'Block Begin', note: 'Point : 13' },
  { n: 'copytopoints1', x: 358, y: 583, i: 'n_copy', c: '#fba61e', ins: [-11, 12] },
  { n: 'foreach_end1', x: 364, y: 671, i: 'n_foreach', c: '#bd6206', type: 'Block End', note: 'Gather : 14', flag: ['#22b4d8', 51], ins: [-11, 11] },
];

const Wires = () => (
  <svg width="100%" height="100%" aria-hidden="true">
    <path d="M354 467L418 467Q423 468 423 475L422 521L401 684Q399 688 394 688L332 688Q327 688 326 683L322 604V563L347 473Q349 467 354 467Z" fill="#4a3a22" stroke="#a8692a" />
    <circle cx="364" cy="671" r="28" fill="#4b70a8" />
    <path d="M336 671a28 28 0 0 1 56 0z" fill="#58616f" />
    <circle cx="364" cy="671" r="19" fill="#a871a4" />
    <circle cx="393" cy="347" r="25" fill="none" stroke="#6b4168" strokeWidth="4" />
    <g fill="none" stroke="#5f86b4" strokeWidth="1.200">
      <path d="M187 94L180 197" />
      <path d="M66 139Q67 151 76 154L180 184Q192 187 194 197" />
      <path d="M187 229V261M187 291V332M187 362V405" />
      <path d="M187 435Q188 443 198 450L342 558Q347 562 347 570" />
      <path d="M393 99V153M393 182L382 211M393 239V265M393 295V332" />
      <path d="M358 598L353 658" stroke="#8d9bb4" />
    </g>
    <path d="M393 362V406M393 436L387 470" stroke="#a9b87c" strokeWidth="1.200" />
    <path d="M386 500L370 568" stroke="#a8a094" strokeDasharray="3 2" />
    <rect x="164" y="197" width="46" height="7" rx="3.500" fill="#b0b0b0" />
    {NODES.map(n => (
      <g key={n.n} fill="#c0c0c0">
        {(n.ins ?? [0]).map(dx => <circle key={dx} cx={n.x + dx} cy={n.y - 14} r="2.800" />)}
        <circle cx={n.x} cy={n.y + 14} r="2.800" />
      </g>
    ))}
  </svg>
);

/* ---------- parameter panel ---------- */

const Params = styled.aside`
  position: absolute;
  top: 0;
  right: 3px;
  width: 408px;
  background: #3b3b3b;
`;
const ParamHead = styled.div`
  display: flex;
  align-items: center;
  height: 27px;
  padding-left: 3px;
  margin-bottom: 2px;
  border-bottom: 1px solid #0c0c0c;
  label { font-weight: 700; font-size: 11px; width: 61px; color: #d0d0d0; white-space: nowrap; }
`;
const TextBox = styled.input<{ $off?: boolean; $bold?: boolean }>`
  flex: 1;
  min-width: 0;
  height: 22px;
  padding: 0 4px;
  font-family: ${MONO};
  font-size: 11px;
  font-weight: ${p => (p.$bold ? 700 : 400)};
  color: ${p => (p.$off ? '#4c4c4c' : '#e2e2e2')};
  background: ${p => (p.$off ? '#303030' : '#131313')};
`;
const ParamRow = styled.div<{ $h?: number; $off?: boolean }>`
  display: grid;
  grid-template-columns: 18px 104px minmax(0, 1fr);
  align-items: center;
  height: ${p => p.$h ?? 25}px;
  padding-left: 3px;
  font-size: 11px;
  color: ${p => (p.$off ? '#858585' : '#c9c9c9')};
  > label { text-align: right; white-space: nowrap; }
`;
const Field = styled.div`
  display: flex;
  align-items: center;
  gap: 8px;
  padding-left: 15px;
`;
const Check = styled.input<{ $dim?: boolean }>`
  appearance: none;
  flex: none;
  width: 14px;
  height: 14px;
  background: ${p => (p.$dim ? '#363636' : '#111')};
  &:checked { position: relative; }
  &:checked::after { content: ''; position: absolute; left: 5px; top: 1px; width: 5px; height: 10px; border: solid #e8e8e8; border-width: 0 2px 3px 0; transform: rotate(28deg); }
`;
const DropBtn = styled.button`
  width: 19px;
  height: 20px;
  display: flex;
  align-items: center;
  justify-content: center;
  margin-left: -6px;
  background: #444;
  border: 1px solid #2a2a2a;
`;

const NameRow = ({ id, label, value, check, off }: { id: string; label: string; value: string; check?: boolean; off?: boolean }) => (
  <ParamRow $off={off}>
    {check === undefined ? <span /> : <Check type="checkbox" defaultChecked={check} aria-label={`Enable ${label}`} />}
    <label htmlFor={id}>{label}</label>
    <Field><TextBox id={id} defaultValue={value} disabled={off} $off={off} $bold={!off} /></Field>
  </ParamRow>
);

const ParamPanel = () => (
  <Params>
    <ParamHead>
      <IconButton $w={24} $down aria-label="Node type"><Icon name="polyframe" size={15} /></IconButton>
      <label htmlFor="node-name">PolyFrame</label>
      <TextBox id="node-name" defaultValue="polyframe1" />
      {['gear', 'hlogo', 'search', 'info', 'help'].map((n, i) => <IconButton key={n} $down={i < 2} aria-label={n}><Icon name={n} size={15} /></IconButton>)}
    </ParamHead>
    <ParamRow>
      <span /><label htmlFor="p-group">Group</label>
      <Field>
        <TextBox id="p-group" />
        <DropBtn aria-label="Group menu"><Down s={7} /></DropBtn>
        <IconButton $w={20} $h={22} aria-label="Pick group"><Icon name="cursor" size={14} /></IconButton>
      </Field>
    </ParamRow>
    <ParamRow>
      <span /><label htmlFor="p-entity">Entity</label>
      <Field>
        <Combo $w={99} $h={21} $pad={14}><select id="p-entity"><option>Primitives</option><option>Points</option></select><ComboArrows $w={22}><UpDown /></ComboArrows></Combo>
      </Field>
    </ParamRow>
    <ParamRow $h={27}>
      <span /><label htmlFor="p-style">Style</label>
      <Field>
        <Combo $w={149} $h={21} $pad={14}><select id="p-style"><option>Two Edges</option><option>First Edge</option></select><ComboArrows $w={22}><UpDown /></ComboArrows></Combo>
      </Field>
    </ParamRow>
    <NameRow id="p-attr" label="Attribute Name" value="" off />
    <NameRow id="p-normal" label="Normal Name" value="n" check={false} off />
    <NameRow id="p-tangent" label="Tangent Name" value="N" check />
    <NameRow id="p-bitangent" label="Bitangent Name" value="tangentv" check={false} off />
    <ParamRow $h={21}>
      <span /><span />
      <Field><Check id="p-ortho" type="checkbox" /><label htmlFor="p-ortho">Make Frame Orthogonal</label></Field>
    </ParamRow>
    <ParamRow $h={21} $off>
      <span /><span />
      <Field><Check id="p-left" type="checkbox" disabled $dim /><label htmlFor="p-left">Left-Handed Frame</label></Field>
    </ParamRow>
  </Params>
);

const NetworkView = () => (
  <Pane>
    <PaneHead forward tabs={[['/obj/geo2', 78], ['Tree View', 77], ['Material Palette', 101], ['Asset Browser', 95]]} />
    <NetBar>
      <Handle><HandleMark /></Handle>
      <MenuItems $gap={14} $left={12}>
        {['Add', 'Edit', 'Go', 'View', 'Tools', 'Layout', 'Help'].map(t => <button key={t}>{t}</button>)}
      </MenuItems>
      <NetIcons>
        {['tools', 'tree', 'list', '', 'palette', 'options', '', 'netbox', 'note', 'image', 'crate', '', 'search', 'eye'].map((n, i) => (
          n ? <IconButton key={n} aria-label={n}><Icon name={n} size={15} /></IconButton> : <IconGap key={i} />
        ))}
      </NetIcons>
    </NetBar>
    <Canvas>
      <Watermark $x={234} $y={12}>Indie Edition</Watermark>
      <Watermark $x={456} $y={17} $bold>Geometry</Watermark>
      <Wires />
      {NODES.map(n => (
        <React.Fragment key={n.n}>
          <NodeBox $x={n.x} $y={n.y} $c={n.c ?? GREY} $sel={n.sel} $flag={n.flag}><Icon name={n.i} size={14} /></NodeBox>
          <NodeLabel $x={n.x} $y={n.y}>
            {n.type && <NodeType>{n.type}</NodeType>}
            {n.n}
            {n.note && <NodeNote>{n.note}</NodeNote>}
          </NodeLabel>
        </React.Fragment>
      ))}
      <ParamPanel />
    </Canvas>
  </Pane>
);

/* ---------- playbar ---------- */

const PlayBar = styled.section`
  flex: none;
  display: flex;
  height: 71px;
  border-top: 1px solid #5a5a5a;
  border-bottom: 1px solid #060606;
  background: #2e2e2e;
`;
const Transport = styled.div`
  flex: none;
  width: 226px;
  padding: 8px 0 0 6px;
`;
const BtnRow = styled.div`
  display: flex;
  align-items: center;
  margin-bottom: 6px;
`;
const FrameSlot = styled.div`padding: 0 3px 0 4px;`;
const KeySteps = styled.div`
  display: flex;
  padding-left: 5px;
`;
const PlayBtn = styled.button<{ $w?: number; $h?: number; $on?: boolean; $dim?: boolean }>`
  width: ${p => p.$w ?? 27}px;
  height: ${p => p.$h ?? 28}px;
  flex: none;
  display: flex;
  align-items: center;
  justify-content: center;
  border: 1px solid ${p => (p.$dim ? '#262626' : '#141414')};
  border-left-width: 0;
  background: ${p => (p.$on ? 'linear-gradient(#93a1a4,#7d8b8e)' : p.$dim ? '#303030' : 'linear-gradient(#505050,#3c3c3c)')};
`;
const NumBox = styled.input<{ $w: number; $h?: number; $dim?: boolean }>`
  display: block;
  flex: none;
  width: ${p => p.$w}px;
  height: ${p => p.$h ?? 20}px;
  padding: 0 3px;
  font-family: ${MONO};
  font-size: 11px;
  color: #dcdcdc;
  background: ${p => (p.$dim ? '#252525' : '#121212')};
`;
const TimeArea = styled.div`
  flex: 1;
  min-width: 0;
  display: flex;
  flex-direction: column;
  justify-content: space-between;
  padding-bottom: 4px;
`;
const Ruler = styled.svg`
  width: 100%;
  height: 36px;
  overflow: hidden;
  font-size: 10px;
`;
const RangeRow = styled.div`
  display: flex;
  align-items: center;
  gap: 4px;
  padding-left: 2px;
`;
const RangeTrack = styled.div`
  flex: 1;
  display: flex;
  align-items: center;
  margin-left: -2px;
  &::after { content: ''; order: 1; flex: 1; height: 3px; background: #787878; }
  svg:last-child { order: 2; }
`;
const KeyZone = styled.div`
  flex: none;
  width: 63px;
  display: flex;
  align-items: center;
  padding-left: 5px;
`;
const KeyButton = styled.button`
  width: 38px;
  height: 38px;
  display: flex;
  align-items: center;
  justify-content: center;
  border-radius: 50%;
  background: #383838;
  border: 1px solid #262626;
`;
const KeyDrop = styled.button`
  width: 16px;
  height: 21px;
  display: flex;
  align-items: center;
  justify-content: center;
  background: #353535;
  border: 1px solid #242424;
`;
const Channels = styled.div`
  flex: none;
  display: grid;
  grid-template-columns: 23px 152px;
  grid-auto-rows: 24px;
  align-items: center;
  gap: 4px 6px;
  padding: 8px 6px 0 2px;
`;
const ChannelBtn = styled.button`
  display: flex;
  align-items: center;
  justify-content: space-between;
  height: 24px;
  padding: 0 4px 0 15px;
  font-size: 11px;
  background: linear-gradient(#4e4e4e, #404040);
  border: 1px solid #1c1c1c;
  white-space: nowrap;
`;
const StatusBar = styled.footer`
  flex: none;
  display: flex;
  height: 22px;
  background: #181818;
`;
const StatusTools = styled.div`
  margin-left: auto;
  display: flex;
  align-items: center;
  padding-left: 3px;
  background: #303030;
`;

/* Percent of the ruler's width at which a frame stands. */
const frameX = (f: number) => ((f - 1) / 240) * 100;

const Timeline = () => (
  <Ruler role="img" aria-label="Timeline, frame 1">
    <rect x="0" y="22" width="100%" height="2" fill="#a8a8a8" />
    {Array.from({ length: 40 }, (_, i) => (i + 1) * 6).map(f => {
      const major = f % 24 === 0;
      return <rect key={f} x={`${frameX(f)}%`} y={major ? 16 : 18} width="1" height={major ? 15 : 10} fill={major ? '#b8b8b8' : '#8a8a8a'} />;
    })}
    {Array.from({ length: 10 }, (_, i) => (i + 1) * 24).map(f => (
      <text key={f} x={`${frameX(f)}%`} y="11" fill="#969696">{f === 240 ? '2' : f}</text>
    ))}
    <path d="M1 25V4h24v16H6z" fill="#000" stroke="#fff" />
    <text x="10" y="17" fill="#fff" fontSize="12">1</text>
  </Ruler>
);

export default function App() {
  return (
    <Frame>
      <Global />
      <MenuBar>
        <Handle><HandleMark /></Handle>
        <MenuItems $gap={9} $left={7}>
          {['File', 'Edit', 'Render', 'Assets', 'Windows', 'Help'].map(t => <button key={t}>{t}</button>)}
        </MenuItems>
        <MenuCombos>
          <Combo $w={130} $h={23} $pad={6} $flat><Icon name="layout" size={13} /><select aria-label="Desktop"><option>Build</option></select><ComboArrows $w={26}><UpDown /></ComboArrows></Combo>
          <Combo $w={130} $h={23} $pad={6} $flat><Icon name="radial" size={14} /><select aria-label="Radial menu"><option>Terrain</option></select><ComboArrows $w={26}><UpDown /></ComboArrows></Combo>
          <Spring />
          <Combo $w={168} $h={23} $pad={4} $flat><Icon name="clapper" size={15} /><select aria-label="Take"><option>Main</option></select><ComboArrows $w={24}><UpDown /></ComboArrows></Combo>
          <IconButton $w={32} aria-label="Help"><Icon name="help" size={15} /></IconButton>
        </MenuCombos>
      </MenuBar>
      <ShelfRow>
        <Handle><HandleMark /></Handle>
        <Shelf tabs={TABS_L} tools={TOOLS_L} width={880} />
        <ShelfGrip>
          <svg width="6" height="18" viewBox="0 0 6 18"><path d="M1 0v18M4 0v18" stroke="#0a0a0a" strokeWidth="2" strokeDasharray="2 1" /></svg>
        </ShelfGrip>
        <Shelf tabs={TABS_R} tools={TOOLS_R} />
      </ShelfRow>
      <Desk>
        <Split><SplitGrip /></Split>
        <SceneView />
        <Split><SplitGrip /></Split>
        <NetworkView />
      </Desk>
      <PlayBar>
        <Handle $end><HandleMark down /></Handle>
        <Transport>
          <BtnRow>
            {['first', 'prev', 'stop', 'play', 'last'].map(n => <PlayBtn key={n} $on={n === 'stop'} aria-label={n}><Icon name={n} size={18} /></PlayBtn>)}
            <FrameSlot><NumBox $w={46} $h={26} aria-label="Current frame" defaultValue="1" /></FrameSlot>
            <PlayBtn $w={14} aria-label="Step back"><Icon name="stepb" size={11} /></PlayBtn>
            <PlayBtn $w={14} aria-label="Step forward"><Icon name="stepf" size={11} /></PlayBtn>
          </BtnRow>
          <BtnRow>
            {['pane', 'speaker', 'loop', 'realtime'].map(n => <PlayBtn key={n} $h={24} aria-label={n}><Icon name={n} size={18} /></PlayBtn>)}
            <KeySteps>
              <PlayBtn $w={23} $h={24} $dim aria-label="Previous key"><Icon name="keyb" size={14} /></PlayBtn>
              <PlayBtn $w={23} $h={24} $dim aria-label="Next key"><Icon name="keyf" size={14} /></PlayBtn>
            </KeySteps>
          </BtnRow>
        </Transport>
        <TimeArea>
          <Timeline />
          <RangeRow>
            <NumBox $w={42} $dim aria-label="Global start" defaultValue="1" />
            <NumBox $w={42} aria-label="Range start" defaultValue="1" />
            <RangeTrack>
              <svg width="7" height="12" viewBox="0 0 7 12"><path d="M0 0l7 6-7 6z" fill="#a8a8a8" /></svg>
              <svg width="7" height="12" viewBox="0 0 7 12"><path d="M7 0L0 6l7 6z" fill="#a8a8a8" /></svg>
            </RangeTrack>
            <NumBox $w={41} aria-label="Range end" defaultValue="240" />
            <NumBox $w={42} $dim aria-label="Global end" defaultValue="240" />
          </RangeRow>
        </TimeArea>
        <KeyZone>
          <KeyButton aria-label="Set key"><Icon name="key" size={18} /></KeyButton>
          <KeyDrop aria-label="Key options"><Down s={8} /></KeyDrop>
        </KeyZone>
        <Channels>
          <PlayBtn $w={23} $h={24} aria-label="Channel list"><Icon name="keylist" size={15} /></PlayBtn>
          <ChannelBtn>0 keys, 0/0 channels<svg width="8" height="8" viewBox="0 0 8 8"><path d="M4 0l4 8H0z" fill="#8a8a8a" /></svg></ChannelBtn>
          <PlayBtn $w={23} $h={24} aria-label="Scope channels"><Icon name="graph" size={15} /></PlayBtn>
          <Combo $w={152} $h={22} $pad={11}><select aria-label="Key mode"><option>Key All Channels</option></select><ComboArrows $w={22}><UpDown /></ComboArrows></Combo>
        </Channels>
      </PlayBar>
      <StatusBar>
        <StatusTools>
          <IconButton $w={28} $h={22} aria-label="Cook"><Icon name="brain" size={18} /></IconButton>
          <IconButton $w={26} $h={22} aria-label="Refresh"><Icon name="refresh" size={15} /></IconButton>
          <Combo $w={118} $h={22} $pad={15} $flat><select aria-label="Update mode"><option>Auto Update</option></select><ComboArrows $w={24}><UpDown /></ComboArrows></Combo>
        </StatusTools>
      </StatusBar>
    </Frame>
  );
}
